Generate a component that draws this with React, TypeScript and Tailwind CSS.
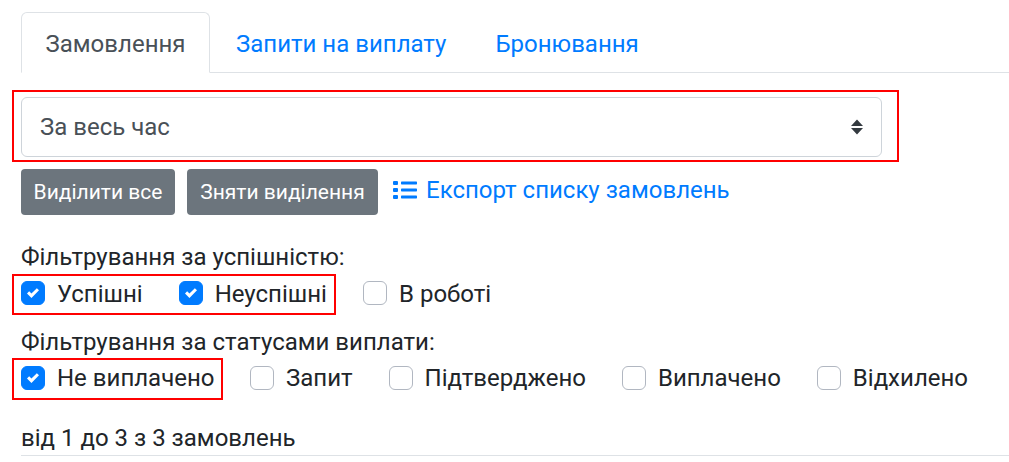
import React from "react";

function Check({ label, on, className = "" }: { label: string; on?: boolean; className?: string }) {
  return (
    <label className={`flex items-center h-[24px] mb-[3px] ${className}`}>
      <span
        className={`w-[24px] h-[24px] rounded-[6px] border flex items-center justify-center shrink-0 ${
          on ? "bg-[#007bff] border-[#007bff]" : "bg-white border-[#b1b7c1]"
        }`}
      >
        {on && (
          <svg width="12" height="12" viewBox="0 0 8 8">
            <path fill="#fff" d="M6.564.75l-3.59 3.612-1.538-1.55L0 4.26l2.974 2.99L8 2.193z" />
          </svg>
        )}
      </span>
      <span className="ml-[12px] mt-[1px] text-[#212529]">{label}</span>
    </label>
  );
}

export default function App() {
  return (
    <div className="w-[1009px] h-[462px] bg-white overflow-hidden pl-[21px] pt-[12px] text-[24px] leading-[36px] text-[#212529] [font-family:Roboto,sans-serif]">
      <div className="flex border-b border-[#dee2e6] h-[61px]">
        <div className="h-[61px] w-[189px] flex items-center justify-center pt-[3px] bg-white border border-[#dee2e6] border-b-white rounded-t-[6px] text-[#495057]">
          Замовлення
        </div>
        <div className="h-[60px] flex items-center pt-[3px] pl-[26px] pr-[25px] text-[#007bff]">Запити на виплату</div>
        <div className="h-[60px] flex items-center pt-[3px] pl-[24px] text-[#007bff]">Бронювання</div>
      </div>

      <div className="ml-[-9px] mt-[17px] w-[887px] h-[72px] border-2 border-[#ff0000] pl-[7px] pt-[5px]">
        <div className="w-[861px] h-[60px] border border-[#ced4da] rounded-[6px] flex items-center justify-between pl-[18px] pr-[18px] text-[#495057]">
          <span>За весь час</span>
          <svg width="12" height="16" viewBox="0 0 12 16">
            <path fill="#343a40" d="M6 0.5 L12 7 H0 Z M6 15.5 L0 9 H12 Z" />
          </svg>
        </div>
      </div>

      <div className="flex items-center mt-[7px] h-[46px]">
        <div className="h-[46px] w-[154px] bg-[#6c757d] rounded-[4px] text-white text-[21px] flex items-center justify-center">
          Виділити все
        </div>
        <div className="h-[46px] w-[191px] ml-[12px] bg-[#6c757d] rounded-[4px] text-white text-[21px] flex items-center justify-center">
          Зняти виділення
        </div>
        <svg className="ml-[15px] mt-[-4px]" width="24" height="20" viewBox="0 0 24 20" fill="#007bff">
          <rect x="0" y="1" width="5" height="4" rx="1" />
          <rect x="0" y="8" width="5" height="4" rx="1" />
          <rect x="0" y="15" width="5" height="4" rx="1" />
          <rect x="8" y="1.5" width="16" height="3" rx="0.7" />
          <rect x="8" y="8.5" width="16" height="3" rx="0.7" />
          <rect x="8" y="15.5" width="16" height="3" rx="0.7" />
        </svg>
        <span className="ml-[9px] mt-[-5px] text-[#007bff]">Експорт списку замовлень</span>
      </div>

      <div className="mt-[24px] h-[35px]">Фільтрування за успішністю:</div>
      <div className="flex items-center">
        <div className="ml-[-9px] w-[324px] h-[41px] border-2 border-[#ff0000] pl-[7px] flex items-center">
          <Check label="Успішні" on />
          <Check label="Неуспішні" on className="ml-[36px]" />
        </div>
        <Check label="В роботі" className="ml-[27px]" />
      </div>

      <div className="mt-[9px] h-[34px]">Фільтрування за статусами виплати:</div>
      <div className="flex items-center">
        <div className="ml-[-9px] w-[211px] h-[42px] border-2 border-[#ff0000] pl-[7px] flex items-center">
          <Check label="Не виплачено" on />
        </div>
        <Check label="Запит" className="ml-[27px]" />
        <Check label="Підтверджено" className="ml-[36px]" />
        <Check label="Виплачено" className="ml-[36px]" />
        <Check label="Відхилено" className="ml-[36px]" />
      </div>

      <div className="mt-[20px] h-[35px]">від 1 до 3 з 3 замовлень</div>
      <div className="border-t border-[#dee2e6] w-[988px]" />
    </div>
  );
}
